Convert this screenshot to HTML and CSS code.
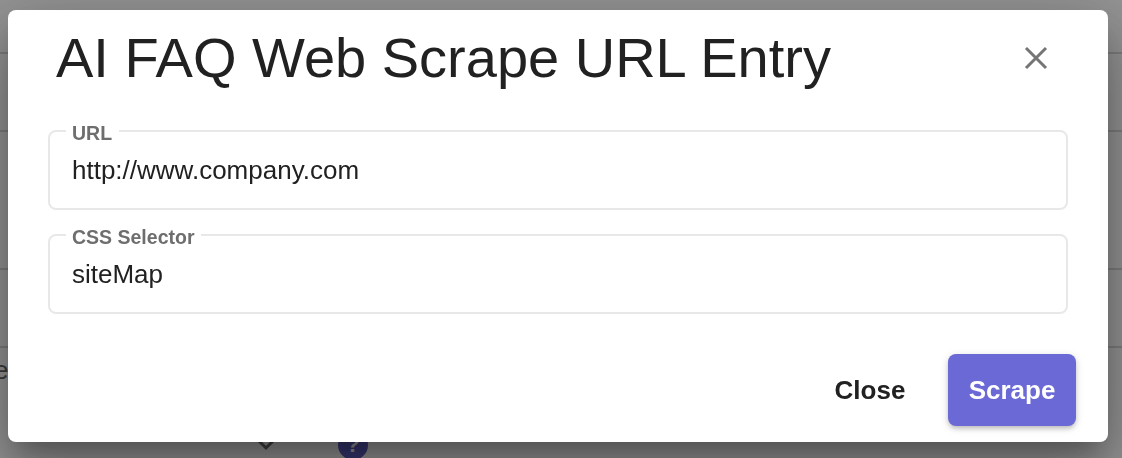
FILE: index.html
```html
<!DOCTYPE html>
<html lang="en">
<head>
  <meta charset="UTF-8" />
  <meta name="viewport" content="width=device-width, initial-scale=1" />
  <title>AI FAQ Web Scrape URL Entry</title>
  <link rel="stylesheet" href="styles.css">
</head>
<body>
  <!-- page behind the dialog -->
  <div class="page">
    <div class="row row-1"></div>
    <div class="row row-2"></div>
    <div class="row row-3"></div>
    <div class="row row-4"></div>
    <div class="row-last">
      <span class="peek-text">e</span>
      <svg class="chevron" width="24" height="24" viewBox="0 0 24 24"><path d="M5 8l7 7 7-7" fill="none" stroke="#6e6e6e" stroke-width="3"/></svg>
      <span class="help">?</span>
    </div>
  </div>
  <div class="backdrop"></div>

  <div class="modal">
    <div class="modal-head">
      <h2>AI FAQ Web Scrape URL Entry</h2>
      <button class="close-x" aria-label="Close">
        <svg width="36" height="36" viewBox="0 0 36 36"><path d="M8 8l20 20M28 8L8 28" stroke="#757575" stroke-width="3"/></svg>
      </button>
    </div>
    <div class="modal-body">
      <fieldset class="field">
        <legend>URL</legend>
        <input type="text" value="http://www.company.com">
      </fieldset>
      <fieldset class="field">
        <legend>CSS Selector</legend>
        <input type="text" value="siteMap">
      </fieldset>
    </div>
    <div class="modal-actions">
      <button class="btn btn-text">Close</button>
      <button class="btn btn-primary">Scrape</button>
    </div>
  </div>
</body>
</html>
```

FILE: styles.css
```css
* {
  margin: 0;
  padding: 0;
  box-sizing: border-box;
}
html, body {
  height: 100%;
  overflow: hidden;
}
body {
  background: #fff;
  font-family: "Liberation Sans", Arial, sans-serif;
  color: #212121;
}
.page {
  height: 458px;
  display: flex;
  flex-direction: column;
}
.row {
  flex-shrink: 0;
  border-bottom: 2px solid #d8d8d8;
}
.row-1 { height: 54px; }
.row-2 { height: 78px; }
.row-3 { height: 138px; }
.row-4 { height: 78px; }
.row-last {
  flex: none;
  height: 110px;
  display: flex;
  align-items: flex-start;
}
.peek-text {
  width: 8px;
  margin: 9px 0 0 -6px;
  font-size: 26px;
  line-height: 26px;
  color: #666;
}
.chevron {
  margin: 85px 0 0 252px;
}
.help {
  flex: none;
  width: 30px;
  height: 30px;
  margin: 82px 0 0 60px;
  border-radius: 50%;
  background: #5f5ec4;
  color: #fff;
  font-weight: bold;
  font-size: 22px;
  line-height: 30px;
  text-align: center;
}
.backdrop {
  position: fixed;
  top: 0;
  left: 0;
  right: 0;
  bottom: 0;
  background: rgba(0, 0, 0, 0.42);
}
.modal {
  position: fixed;
  top: 10px;
  left: 8px;
  width: 1100px;
  height: 432px;
  display: flex;
  flex-direction: column;
  background: #fff;
  border-radius: 8px;
  box-shadow: 0 16px 22px -10px rgba(0, 0, 0, 0.24),
              0 36px 57px 4px rgba(0, 0, 0, 0.2),
              0 14px 69px 12px rgba(0, 0, 0, 0.18);
}
.modal-head {
  display: flex;
  align-items: center;
  justify-content: space-between;
  height: 96px;
  padding: 0 54px 0 48px;
}
.modal-head h2 {
  font-size: 56px;
  font-weight: normal;
  line-height: 1;
}
.close-x {
  display: flex;
  background: none;
  border: 0;
}
.modal-body {
  display: flex;
  flex-direction: column;
  gap: 13px;
  padding: 13px 40px 0;
}
.field {
  height: 91px;
  padding: 0 22px;
  border: 2px solid #e8e8e8;
  border-radius: 8px;
}
.field legend {
  margin-left: -6px;
  padding: 4px 7px 0 6px;
  font-size: 19.5px;
  font-weight: bold;
  line-height: 20px;
  color: #6e6e6e;
}
.field input {
  display: block;
  width: 100%;
  height: 40px;
  margin-top: 7px;
  border: 0;
  outline: 0;
  background: none;
  font: 26px "Liberation Sans", Arial, sans-serif;
  color: #212121;
}
.modal-actions {
  display: flex;
  justify-content: flex-end;
  align-items: center;
  gap: 32px;
  padding: 40px 32px 0;
}
.btn {
  height: 72px;
  border: 0;
  border-radius: 8px;
  font: bold 26px "Liberation Sans", Arial, sans-serif;
}
.btn-text {
  width: 92px;
  background: none;
  color: #212121;
}
.btn-primary {
  width: 128px;
  background: #6a69d6;
  color: #fff;
  box-shadow: 0 3px 5px -1px rgba(0, 0, 0, 0.2),
              0 2px 8px rgba(0, 0, 0, 0.14);
}
```
